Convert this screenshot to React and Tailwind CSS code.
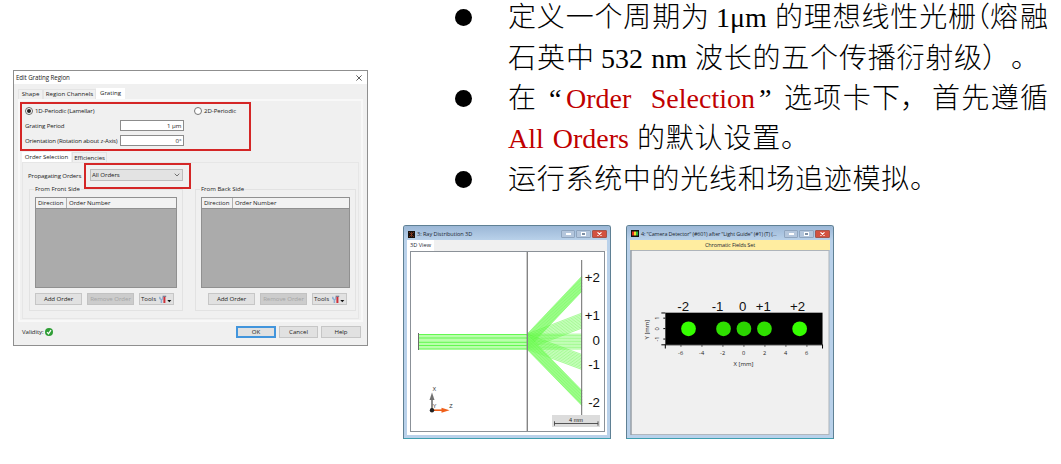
import React from 'react'

const Seg = ({ className, children }) => (
    <span className={`block shrink-0 whitespace-nowrap [text-align-last:justify] ${className}`}>{children}</span>
)

const Line = ({ bullet, children }) => (
    <div className="flex h-[40.4px] items-center">
        <div className="w-[53px] shrink-0">{bullet && <div className="mb-px h-[17px] w-[17px] rounded-full bg-black" />}</div>
        {children}
    </div>
)

const Instructions = () => (
    <div className="-mt-[2px] ml-[455px] h-[204px] w-[606px] font-['Liberation_Serif','Noto_Sans_CJK_SC',serif] text-[28px] leading-[40px] font-light text-black">
        <Line bullet>
            <Seg className="w-[201px]">定义一个周期为</Seg>
            <Seg className="ml-[7px] w-[51px]">1μm</Seg>
            <Seg className="ml-[8px] w-[201px]">的理想线性光栅</Seg>
            <Seg className="w-[14px] [font-feature-settings:'halt']">（</Seg>
            <Seg className="w-[58px]">熔融</Seg>
        </Line>
        <Line>
            <Seg className="w-[86px]">石英中</Seg>
            <Seg className="ml-[7px] w-[86px]">532 nm</Seg>
            <Seg className="ml-[8px] w-[287px]">波长的五个传播衍射级</Seg>
            <Seg className="w-[29px]">）</Seg>
            <Seg className="w-[28px]">。</Seg>
        </Line>
        <Line bullet>
            <Seg className="w-[28px]">在</Seg>
            <Seg className="ml-[13px] w-[17px]">“</Seg>
            <Seg className="w-[189px] text-[#c00000]">Order Selection</Seg>
            <Seg className="ml-[4px] w-[14px]">”</Seg>
            <Seg className="ml-[11px] w-[116px]">选项卡下</Seg>
            <Seg className="w-[28px]">，</Seg>
            <Seg className="ml-[4px] w-[116px]">首先遵循</Seg>
        </Line>
        <Line>
            <Seg className="w-[121px] text-[#c00000]">All Orders</Seg>
            <Seg className="ml-[8px] w-[172px]">的默认设置。</Seg>
        </Line>
        <Line bullet>
            <Seg className="w-[430px]">运行系统中的光线和场追迹模拟。</Seg>
        </Line>
    </div>
)

const Button = ({ look = 'border border-[#c6c6c6] bg-[#e1e1e1]', className, children }) => (
    <div className={`flex h-[12px] shrink-0 items-center justify-center ${look} ${className}`}>{children}</div>
)

const ToolsIcon = () => (
    <svg className="ml-[3px] h-[9px] w-[13px]" viewBox="0 0 13 9">
        <path d="M.8 1.8v1.6l1.6 1.2V8" fill="none" stroke="#8faed0" strokeWidth="1.5" />
        <path d="M3.6 1.4h3.6" stroke="#7d7f92" strokeWidth="1.4" />
        <path d="M3.6 2v2.6L2.4 5" fill="none" stroke="#8faed0" strokeWidth="1" />
        <path d="M5.4 2v6" stroke="#cf2f38" strokeWidth="2" />
        <path d="M8.3 5h4L10.3 7.2z" fill="#111" />
    </svg>
)

const OrderGroup = ({ title, className, tableClass, buttonsClass }) => (
    <div className={`h-[122px] border border-[#e2e2e2] ${className}`}>
        <div className="-mt-[5px] ml-[4px] h-[8px] w-fit bg-[#f0f0f0] px-px leading-[8px] tracking-[-0.03px]">{title}</div>
        <div className={`mt-[4px] ml-[5px] h-[91px] border border-[#909090] bg-[#ababab] ${tableClass}`}>
            <div className="flex h-[11px] border-b border-[#909090] bg-[#f2f2f2] leading-[10px]">
                <div className="w-[31px] border-r border-[#b0b0b0] pl-[2px] tracking-[-0.06px]">Direction</div>
                <div className="pl-[2px] tracking-[-0.06px]">Order Number</div>
            </div>
        </div>
        <div className={`mt-[5px] flex gap-[5px] ${buttonsClass}`}>
            <Button className="w-[47px] tracking-[-0.06px]">Add Order</Button>
            <Button className="w-[47px] tracking-[-0.06px] text-[#a5a5a5]" look="border border-[#c2c2c2] bg-[#cccccc]">
                Remove Order
            </Button>
            <Button className="w-[35px]">
                Tools
                <ToolsIcon />
            </Button>
        </div>
    </div>
)

const Field = ({ label, value, className, labelClass }) => (
    <div className={`flex h-[11px] items-center ${className}`}>
        <div className={`w-[94.5px] shrink-0 whitespace-nowrap ${labelClass}`}>{label}</div>
        <div className="h-[11px] w-[64px] border border-[#8c8c8c] bg-white pr-px text-right leading-[9px]">{value}</div>
    </div>
)

const GratingDialog = () => (
    <div className="mt-[70px] ml-[13px] flex h-[276px] w-[355px] shrink-0 flex-col border border-[#8f8f8f] bg-[#f0f0f0] font-['Open_Sans','Noto_Sans',sans-serif] text-[6.1px] leading-[8px] whitespace-nowrap text-[#222]">
        <div className="flex h-[13px] items-center justify-between bg-white pr-[5px] pl-[2px]">
            <span className="text-[6.2px] tracking-[-0.08px]">Edit Grating Region</span>
            <svg className="h-[6px] w-[6px]" viewBox="0 0 6 6">
                <path d="M.4 .4l5.2 5.2M5.6 .4L.4 5.6" stroke="#333" strokeWidth=".8" />
            </svg>
        </div>
        <div className="mt-[4px] ml-[4px] flex h-[11px] items-end leading-[10px]">
            <div className="h-[10px] w-[25px] border border-b-0 border-[#e4e4e4] text-center leading-[7px]">Shape</div>
            <div className="h-[10px] w-[53px] border border-b-0 border-[#e4e4e4] text-center leading-[7px]">Region Channels</div>
            <div className="h-[11px] w-[29px] bg-white text-center">Grating</div>
        </div>
        <div className="ml-[4px] h-[223px] w-[345px] border-2 border-[#f8f8f8]">
            <div className="mt-px h-[49px] w-[231px] border-2 border-[#d42626] pt-[3px] pl-[3px]">
                <div className="flex h-[8px] items-center">
                    <div className="flex h-[8px] w-[8px] items-center justify-center rounded-full border border-[#666] bg-white">
                        <div className="h-[4px] w-[4px] rounded-full bg-[#222]" />
                    </div>
                    <span className="ml-[2px] w-[159px] tracking-[-0.15px]">1D-Periodic (Lamellar)</span>
                    <div className="h-[8px] w-[8px] rounded-full border border-[#777] bg-white" />
                    <span className="ml-[2px] tracking-[-0.06px]">2D-Periodic</span>
                </div>
                <Field label="Grating Period" value="1 µm" className="mt-[5px]" labelClass="tracking-[-0.12px]" />
                <Field label="Orientation (Rotation about z-Axis)" value="0°" className="mt-[4px]" labelClass="tracking-[-0.16px]" />
            </div>
            <div className="mt-px ml-[2px] flex h-[10px] leading-[9px]">
                <div className="w-[49px] bg-white text-center tracking-[-0.06px]">Order Selection</div>
                <div className="ml-px w-[35px] border border-b-0 border-[#e2e2e2] text-center tracking-[-0.06px]">Efficiencies</div>
            </div>
            <div className="ml-[2px] h-[157px] w-[337px] border border-[#e6e6e6]">
                <div className="flex h-[26px] items-center pl-[5px]">
                    <span className="w-[56px] tracking-[-0.14px]">Propagating Orders</span>
                    <div className="h-[26px] w-[107px] border-2 border-[#d42626] px-[4px] pt-[4px]">
                        <div className="flex h-[12px] w-[93px] items-center justify-between border border-[#bdbdbd] bg-[#e3e3e3] pr-[2px] pl-px tracking-[-0.06px]">
                            All Orders
                            <svg className="h-[4px] w-[6px]" viewBox="0 0 6 4">
                                <path d="M.7 .7L3 3L5.3 .7" fill="none" stroke="#555" strokeWidth=".8" />
                            </svg>
                        </div>
                    </div>
                </div>
                <div className="flex gap-[12px] pl-[6px]">
                    <OrderGroup title="From Front Side" className="w-[154px]" tableClass="w-[142px]" buttonsClass="ml-[5px]" />
                    <OrderGroup title="From Back Side" className="w-[161px]" tableClass="w-[149px]" buttonsClass="ml-[12px]" />
                </div>
            </div>
        </div>
        <div className="mt-[4px] flex h-[12px] items-center pl-[8px]">
            <span className="w-[22.5px] tracking-[-0.06px]">Validity:</span>
            <svg className="h-[8px] w-[8px]" viewBox="0 0 8 8">
                <circle cx="4" cy="4" r="4" fill="#2f9e36" />
                <path d="M2 4.2l1.5 1.5L6 2.2" fill="none" stroke="#fff" strokeWidth="1.2" />
            </svg>
            <div className="ml-[183.5px] flex gap-[3px]">
                <Button className="w-[40px]" look="border-2 border-[#4295dc] bg-[#e1e1e1]">OK</Button>
                <Button className="w-[39px]">Cancel</Button>
                <Button className="w-[40px]">Help</Button>
            </div>
        </div>
    </div>
)

const WindowButtons = () => (
    <div className="flex shrink-0 gap-px">
        <div className="flex h-[8px] w-[14px] items-center justify-center rounded-[1px] border border-[#8fa5bf] bg-[#b4c6dc]">
            <div className="h-[2px] w-[5px] bg-white" />
        </div>
        <div className="flex h-[8px] w-[15px] items-center justify-center rounded-[1px] border border-[#8fa5bf] bg-[#b4c6dc]">
            <div className="h-[4px] w-[5px] border border-white bg-[#7d8fa5]" />
        </div>
        <div className="flex h-[8px] w-[15px] items-center justify-center rounded-[1px] border border-[#a3544c] bg-[#d3513f]">
            <svg className="h-[4px] w-[5px]" viewBox="0 0 5 4">
                <path d="M.5 .3l4 3.4M4.5 .3l-4 3.4" stroke="#fff" strokeWidth="1.1" />
            </svg>
        </div>
    </div>
)

const MdiWindow = ({ icon, title, titleClass, children }) => (
    <div className="flex h-[214px] w-[208px] shrink-0 flex-col rounded-t-[3px] border border-[#5f8094] border-b-[#3f9fb0] bg-[#b9d1ea] px-[3px] pb-[3px] font-['Open_Sans','Noto_Sans',sans-serif] text-[5.6px] whitespace-nowrap text-[#1c2733]">
        <div className="-mx-[3px] flex h-[14px] items-center rounded-t-[2px] bg-linear-to-b from-[#9bb7d6] to-[#b9d1ea] pt-[2px] pr-[3px] pl-[4px]">
            {icon}
            <span className={`ml-[2px] min-w-0 grow leading-[8px] ${titleClass}`}>{title}</span>
            <WindowButtons />
        </div>
        {children}
    </div>
)

// y is the top of each order's beam on the detector line
const ORDERS = [
    { label: '+2', y: 276, labelY: 281.5 },
    { label: '+1', y: 313, labelY: 320 },
    { label: '0', y: 334, labelY: 344.7 },
    { label: '-1', y: 354.5, labelY: 368.5 },
    { label: '-2', y: 390.5, labelY: 407 },
]
const RAYS = [0, 1.5, 3, 4.5, 6, 7.5, 9, 10.5, 12, 13.5, 15]

const RayView = () => (
    <svg className="h-[181px] w-[196px] font-['Liberation_Sans',sans-serif]" viewBox="410 251 196 181">
        <rect x="410.5" y="251.5" width="194" height="180" fill="#fff" stroke="#8b9198" />
        <rect x="418.5" y="334" width="109" height="15.5" fill="#b9ffab" />
        {[334.5, 338, 342.3, 345.5, 349].map((y) => (
            <path key={y} d={`M418.5 ${y}H527`} stroke="#3df52a" strokeWidth=".7" />
        ))}
        {ORDERS.map((o) => (
            <g key={o.label}>
                <path d={`M527 334L582 ${o.y}v15.5L527 349.5z`} fill="#8dff78" fillOpacity={Math.abs(o.label) === 2 ? 0.7 : 0.3} />
                {RAYS.map((r) => (
                    <path key={r} d={`M527 ${334.2 + r}L582 ${o.y + r}`} stroke="#4cf52e" strokeWidth=".38" />
                ))}
            </g>
        ))}
        <path d="M418.5 333v17M581.7 260v156" stroke="#6a6a6a" strokeWidth="1" />
        <path d="M527.3 252v179" stroke="#858585" strokeWidth="1.4" />
        {ORDERS.map((o) => (
            <text key={o.label} x="600" y={o.labelY} textAnchor="end" fontSize="13.3" fill="#111">
                {o.label}
            </text>
        ))}
        <path d="M432 410v-14" stroke="#707070" strokeWidth="1.6" />
        <path d="M429.5 400l2.5-7.5 2.5 7.5z" fill="#707070" />
        <path d="M432 410.2h12" stroke="#f0601a" strokeWidth="1.6" />
        <path d="M441.5 407.7l8 2.5-8 2.5z" fill="#f0601a" />
        <circle cx="432" cy="410.2" r="2.2" fill="#222" />
        <g fontSize="5.5" fill="#333">
            <text x="432.5" y="391">X</text>
            <text x="432.8" y="407.5">Y</text>
            <text x="449.3" y="408.3">Z</text>
        </g>
        <rect x="552" y="415" width="48" height="12" fill="#dcdcdc" />
        <text x="576" y="421.8" textAnchor="middle" fontSize="5.6" fill="#222">4 mm</text>
        <path d="M554.5 423.5H598M554.5 421.3v4.4M598 421.3v4.4" stroke="#444" strokeWidth=".9" />
    </svg>
)

const SPOTS = [
    { label: '-2', x: 688.3, labelX: 683, fill: '#35ff00' },
    { label: '-1', x: 723.5, labelX: 717.5, fill: '#2fe000' },
    { label: '0', x: 744, labelX: 742.7, fill: '#2bd400' },
    { label: '+1', x: 764.6, labelX: 763.5, fill: '#2fe000' },
    { label: '+2', x: 800, labelX: 797.8, fill: '#35ff00' },
]

const CameraView = () => (
    <svg className="h-[186px] w-[200px] font-['Open_Sans','Noto_Sans',sans-serif]" viewBox="630 249 200 186">
        <rect x="630.5" y="249.5" width="199" height="185" fill="#f0f0f0" stroke="#aeb4ba" />
        <path d="M630.5 249v186" stroke="#8d949b" />
        <rect x="665" y="312" width="158" height="32" fill="#000" />
        <path d="M661 312.3h4M663 317.5h2M663 328h2M663 338.5h2M661 344.3h162M665 344v4M823 344v4" stroke="#000" strokeWidth="1" />
        {SPOTS.map((s) => (
            <g key={s.label}>
                <circle cx={s.x} cy="328.2" r="7.4" fill={s.fill} />
                <text x={s.labelX} y="310" textAnchor="middle" fontSize="13.3" fill="#111" className="font-['Liberation_Sans',sans-serif]">
                    {s.label}
                </text>
            </g>
        ))}
        <g fontSize="5.7" fill="#222" textAnchor="middle">
            {[-6, -4, -2, 0, 2, 4, 6].map((n) => (
                <g key={n}>
                    <path d={`M${744 + n * 10.55} 344v2.3`} stroke="#333" strokeWidth=".8" />
                    <text x={743.7 + n * 10.55} y="354.8">{n}</text>
                </g>
            ))}
            <text x="743.5" y="365.2" fontSize="6">X [mm]</text>
            <text transform="translate(659 317.5) rotate(-90)">1</text>
            <text transform="translate(659 328.3) rotate(-90)">0</text>
            <text transform="translate(659 338.5) rotate(-90)">-1</text>
            <text transform="translate(649 329) rotate(-90)" fontSize="6">Y [mm]</text>
        </g>
    </svg>
)

const RayIcon = () => (
    <svg className="h-[7px] w-[7px] shrink-0" viewBox="0 0 7 7">
        <rect width="7" height="7" fill="#17110c" />
        <path d="M1 1l5 5M6 1L1 6M3.5 1v5" stroke="#a5482c" strokeWidth=".6" />
    </svg>
)

const CameraIcon = () => (
    <svg className="h-[7px] w-[8px] shrink-0" viewBox="0 0 8 7">
        <rect width="8" height="7" fill="#101010" />
        <rect x="1" y="1.5" width="2" height="4" fill="#e22f1e" />
        <rect x="3" y="1.5" width="2" height="4" fill="#f2dc2d" />
        <rect x="5" y="1.5" width="2" height="4" fill="#36b838" />
    </svg>
)

const App = () => (
    <div className="h-[464px] w-[1061px] overflow-hidden bg-white">
        <div className="flex">
            <div className="h-[464px] w-[403px] shrink-0">
                <div className="flex">
                    <GratingDialog />
                </div>
            </div>
            <div className="-ml-[403px]">
                <Instructions />
                <div className="mt-[23px] ml-[403px] flex gap-[15px]">
                    <MdiWindow icon={<RayIcon />} title="3: Ray Distribution 3D" titleClass="tracking-[-0.06px]">
                        <div className="flex grow flex-col bg-white">
                            <div className="flex h-[11px] bg-[#f0f0f0]">
                                <div className="w-[27px] bg-white text-center leading-[10px]">3D View</div>
                            </div>
                            <div className="pl-[3px]">
                                <RayView />
                            </div>
                        </div>
                    </MdiWindow>
                    <MdiWindow
                        icon={<CameraIcon />}
                        title={'4: "Camera Detector" (#601) after "Light Guide" (#1) (T) (...'}
                        titleClass="text-[5.4px] tracking-[-0.14px]"
                    >
                        <div className="h-[10px] bg-[#ffeda0] text-center text-[5.6px] leading-[10px] tracking-[-0.14px]">Chromatic Fields Set</div>
                        <CameraView />
                    </MdiWindow>
                </div>
            </div>
        </div>
    </div>
)

export default App
